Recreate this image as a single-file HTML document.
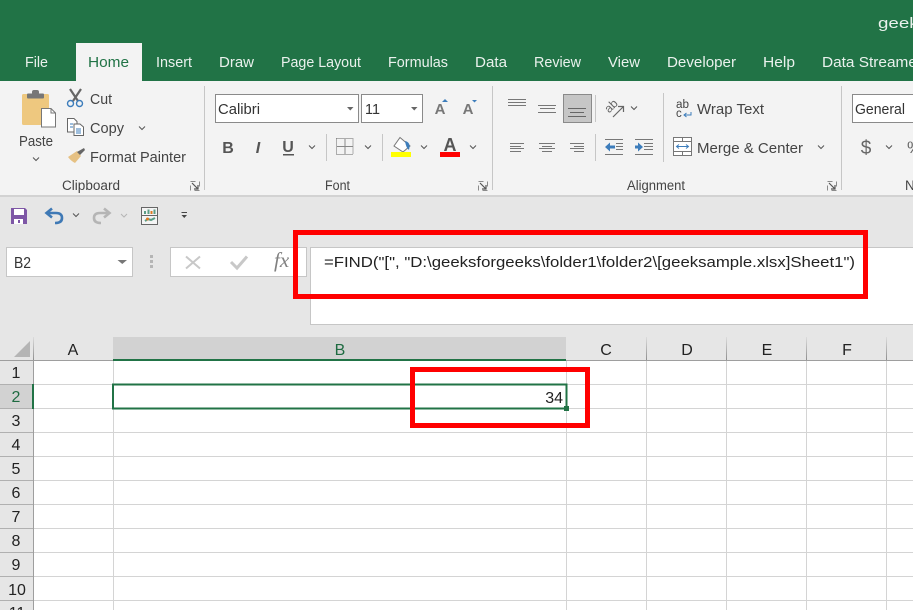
<!DOCTYPE html>
<html><head><meta charset="utf-8"><style>
html,body{margin:0;padding:0;width:913px;height:610px;overflow:hidden;background:#fff}
svg{display:block}
text{font-family:"Liberation Sans",sans-serif;white-space:pre}
.t{font-size:15px;fill:#eaf1ed}
.r{font-size:15px;fill:#444}
.g{font-size:13.5px;fill:#444}
.h{font-size:16px;fill:#222;text-anchor:middle}
</style></head><body>
<svg width="913" height="610" viewBox="0 0 913 610" xmlns="http://www.w3.org/2000/svg">
<defs>
<path id="chev" d="M-3 -1.5L0 1.5L3 -1.5" fill="none" stroke="#555" stroke-width="1"/>
<g id="dl"><rect x="0.5" y="0.5" width="9" height="9" fill="none" stroke="#8a8a8a" stroke-width="1" stroke-dasharray="5 4"/><path d="M2 2L8 8M8 4V8H4" fill="none" stroke="#555" stroke-width="1.2"/></g>
<linearGradient id="hd" x1="0" y1="0" x2="0" y2="1"><stop offset="0" stop-color="#dcdcdc"/><stop offset="1" stop-color="#8f8f8f"/></linearGradient>
</defs>
<rect width="913" height="610" fill="#fff"/>
<!-- title + tabs -->
<rect width="913" height="81" fill="#217346"/>
<rect x="76" y="43" width="66" height="38" fill="#f3f3f3"/>
<text x="878" y="28" class="t" fill="#fff" textLength="50" lengthAdjust="spacingAndGlyphs">geeks</text>
<text x="25" y="67" class="t" textLength="23" lengthAdjust="spacingAndGlyphs">File</text>
<text x="88" y="67" class="t" style="fill:#217346" textLength="41" lengthAdjust="spacingAndGlyphs">Home</text>
<text x="156" y="67" class="t" textLength="36" lengthAdjust="spacingAndGlyphs">Insert</text>
<text x="219" y="67" class="t" textLength="35" lengthAdjust="spacingAndGlyphs">Draw</text>
<text x="281" y="67" class="t" textLength="80" lengthAdjust="spacingAndGlyphs">Page Layout</text>
<text x="388" y="67" class="t" textLength="60" lengthAdjust="spacingAndGlyphs">Formulas</text>
<text x="475" y="67" class="t" textLength="32" lengthAdjust="spacingAndGlyphs">Data</text>
<text x="534" y="67" class="t" textLength="47" lengthAdjust="spacingAndGlyphs">Review</text>
<text x="608" y="67" class="t" textLength="32" lengthAdjust="spacingAndGlyphs">View</text>
<text x="667" y="67" class="t" textLength="69" lengthAdjust="spacingAndGlyphs">Developer</text>
<text x="763" y="67" class="t" textLength="32" lengthAdjust="spacingAndGlyphs">Help</text>
<text x="822" y="67" class="t" textLength="100" lengthAdjust="spacingAndGlyphs">Data Streamer</text>
<!-- ribbon -->
<rect y="81" width="913" height="114" fill="#f3f3f3"/>
<rect y="195" width="913" height="2" fill="#d2d2d2"/>
<rect y="197" width="913" height="140" fill="#e6e6e6"/>
<g fill="#c6c6c6">
<rect x="204" y="86" width="1" height="104"/><rect x="492" y="86" width="1" height="104"/><rect x="841" y="86" width="1" height="104"/>
<rect x="326" y="134" width="1" height="27"/><rect x="382" y="134" width="1" height="27"/>
<rect x="595" y="95" width="1" height="27"/><rect x="595" y="134" width="1" height="27"/>
<rect x="663" y="93" width="1" height="69"/>
</g>
<!-- clipboard -->
<rect x="22" y="94" width="27" height="31" rx="1.5" fill="#eec87f"/>
<rect x="27" y="93.500" width="17" height="5" rx="1" fill="#777"/>
<rect x="32" y="90" width="7" height="5" rx="2" fill="#777"/>
<path d="M41.500 108.500H51L55.500 113V127H41.500Z" fill="#fff" stroke="#777"/>
<path d="M51 108.500V113H55.500" fill="none" stroke="#777"/>
<text x="19" y="146" class="r" textLength="34" lengthAdjust="spacingAndGlyphs">Paste</text>
<use href="#chev" x="36" y="159"/>
<path d="M70 89L78 101M81 89L73 101" stroke="#666" stroke-width="2.200" fill="none"/>
<circle cx="70.500" cy="103.500" r="3" fill="none" stroke="#3d7dbb" stroke-width="1.400"/><circle cx="79.500" cy="103.500" r="3" fill="none" stroke="#3d7dbb" stroke-width="1.400"/>
<text x="90" y="104" class="r" textLength="22" lengthAdjust="spacingAndGlyphs">Cut</text>
<path d="M67.500 118.500H74L77 121.500V132H67.500Z" fill="#fff" stroke="#666"/>
<path d="M74 124H80L83.500 127V135.500H74Z" fill="#fff" stroke="#666"/>
<path d="M70 124H73M70 127H73M76 129H81M76 131H81M76 133H81" stroke="#3d7dbb"/>
<text x="90" y="133" class="r" textLength="34" lengthAdjust="spacingAndGlyphs">Copy</text>
<use href="#chev" x="142" y="128"/>
<path d="M68 157L77 151L81 156L75 163Q71 161 68 157Z" fill="#e6c183"/>
<path d="M77 152L84 148L85 150L80 155Z" fill="#666"/>
<text x="90" y="162" class="r" textLength="96" lengthAdjust="spacingAndGlyphs">Format Painter</text>
<text x="62" y="190" class="g" textLength="58" lengthAdjust="spacingAndGlyphs">Clipboard</text>
<use href="#dl" x="190" y="181"/>
<!-- font -->
<rect x="215.500" y="94.500" width="143" height="28" fill="#fff" stroke="#8a8a8a"/>
<rect x="361.500" y="94.500" width="61" height="28" fill="#fff" stroke="#8a8a8a"/>
<text x="218" y="114" font-size="14.500" fill="#333" textLength="42" lengthAdjust="spacingAndGlyphs">Calibri</text>
<text x="365" y="114" font-size="14.500" fill="#333" textLength="15" lengthAdjust="spacingAndGlyphs">11</text>
<path d="M347 107H353.500L350.250 110.500Z" fill="#666"/><path d="M411 107H417.500L414.250 110.500Z" fill="#666"/>
<text x="440" y="114" font-size="15" font-weight="bold" fill="#777" text-anchor="middle">A</text>
<path d="M442 102L445 99L448 102Z" fill="#3d7dbb"/>
<text x="468" y="114" font-size="15" font-weight="bold" fill="#777" text-anchor="middle">A</text>
<path d="M472 100L474.500 102.500L477 100Z" fill="#3d7dbb"/>
<text x="228" y="153" font-size="16" font-weight="bold" fill="#555" text-anchor="middle">B</text>
<text x="258" y="153" font-size="16" font-weight="bold" font-style="italic" fill="#555" text-anchor="middle">I</text>
<text x="288" y="152" font-size="16" font-weight="bold" fill="#555" text-anchor="middle">U</text>
<rect x="283" y="154" width="11" height="1.500" fill="#555"/>
<use href="#chev" x="312" y="147"/>
<path d="M336.500 138.500H353M336.500 154.500H353M336.500 138.500V154.500M353 138.500V154.500" stroke="#666" stroke-dasharray="1 1" fill="none"/>
<path d="M345 139V154M337 146.500H353" stroke="#888" fill="none"/>
<use href="#chev" x="368" y="147"/>
<path d="M400 137.500L410 146L403 152L394 146Z" fill="#fff" stroke="#777"/>
<path d="M405 141Q411 142 409 150Q406 148 405 141Z" fill="#3d7dbb"/>
<rect x="391" y="152" width="20" height="5" fill="#ff0"/>
<use href="#chev" x="424" y="147"/>
<text x="450" y="151" font-size="18" font-weight="bold" fill="#555" text-anchor="middle">A</text>
<rect x="440" y="152" width="20" height="5" fill="#f00"/>
<use href="#chev" x="473" y="147"/>
<text x="325" y="190" class="g" textLength="25" lengthAdjust="spacingAndGlyphs">Font</text>
<use href="#dl" x="478" y="181"/>
<!-- alignment -->
<g stroke="#777" stroke-width="1" fill="none">
<path d="M508 99.500H526M508 102.500H526M508 105.500H526"/>
<path d="M538 105.500H556M540 108.500H555M538 112.500H556"/>
<path d="M510 143.500H524M510 146.500H521M510 148.500H524M510 151.500H521"/>
<path d="M539 143.500H555M542 146.500H552M539 148.500H555M542 151.500H552"/>
<path d="M570 143.500H584M574 146.500H584M570 148.500H584M574 151.500H584"/>
<path d="M605 139.500H623M616 143.500H623M616 146.500H623M616 149.500H623M605 154.500H623"/>
<path d="M635 139.500H653M644 143.500H653M644 146.500H653M644 149.500H653M635 154.500H653"/>
</g>
<path d="M605 147L610 142.500V145.500H615V148.500H610V151.500Z" fill="#3d7dbb"/>
<path d="M643 147L638 142.500V145.500H635V148.500H638V151.500Z" fill="#3d7dbb"/>
<rect x="563.500" y="94.500" width="28" height="28" fill="#c6c6c6" stroke="#8a8a8a"/>
<path d="M568 108.500H586M570 112.500H584M568 116.500H586" stroke="#666" fill="none"/>
<text x="611" y="110" font-size="12" fill="#666" text-anchor="middle" transform="rotate(-45 611 106)">ab</text>
<path d="M613 117L623 107M618 106.500H623.500V112" stroke="#666" fill="none" stroke-width="1.200"/>
<use href="#chev" x="634" y="108"/>
<text x="676" y="108" font-size="11.500" fill="#444" textLength="13" lengthAdjust="spacingAndGlyphs">ab</text>
<text x="676" y="117" font-size="11.500" fill="#444">c</text>
<path d="M691 112V115H684M686.500 113L684 115L686.500 117" stroke="#3d7dbb" fill="none"/>
<text x="697" y="114" class="r" textLength="67" lengthAdjust="spacingAndGlyphs">Wrap Text</text>
<rect x="673.500" y="137.500" width="18" height="18" fill="#fff" stroke="#777"/>
<path d="M674 141.500H691M674 151.500H691M682.500 138V141M682.500 152V155" stroke="#777" fill="none"/>
<path d="M677 146.500H688M679 144.500L676.500 146.500L679 148.500M686 144.500L688.500 146.500L686 148.500" stroke="#3d7dbb" fill="none"/>
<text x="697" y="153" class="r" textLength="106" lengthAdjust="spacingAndGlyphs">Merge &amp; Center</text>
<use href="#chev" x="821" y="147"/>
<text x="627" y="190" class="g" textLength="58" lengthAdjust="spacingAndGlyphs">Alignment</text>
<use href="#dl" x="827" y="181"/>
<!-- number -->
<rect x="852.500" y="94.500" width="70" height="28" fill="#fff" stroke="#8a8a8a"/>
<text x="855" y="114" font-size="14.500" fill="#333" textLength="50" lengthAdjust="spacingAndGlyphs">General</text>
<text x="866" y="154" font-size="19" fill="#666" text-anchor="middle">$</text>
<use href="#chev" x="889" y="147"/>
<text x="907" y="153" font-size="17" fill="#666">%</text>
<text x="905" y="190" class="g">N</text>
<!-- QAT -->
<path d="M11 208H25L27 210V224H11Z" fill="#7e57a6"/>
<rect x="14" y="209" width="10" height="6" fill="#fff"/><rect x="14" y="219" width="9" height="5" fill="#fff"/><rect x="18" y="220" width="2" height="3" fill="#7e57a6"/>
<path d="M47 213H56Q62 213 62 218Q62 223 55 223" fill="none" stroke="#3f79b5" stroke-width="2.600"/>
<path d="M52 208.500L46.500 213L52 217.500" fill="none" stroke="#3f79b5" stroke-width="2.600"/>
<use href="#chev" x="76" y="215"/>
<path d="M109 213H100Q94 213 94 218Q94 223 101 223" fill="none" stroke="#b5b5b5" stroke-width="2.600"/>
<path d="M104 208.500L109.500 213L104 217.500" fill="none" stroke="#b5b5b5" stroke-width="2.600"/>
<path d="M121 214L124 217L127 214" fill="none" stroke="#b5b5b5"/>
<rect x="141.500" y="207.500" width="16" height="17" fill="#f4f4f4" stroke="#666"/>
<path d="M142 215.500H157" stroke="#666"/>
<rect x="144" y="211" width="2" height="3" fill="#5b9d86"/><rect x="147.500" y="209.500" width="2" height="4.500" fill="#5b9d86"/><rect x="150.500" y="211" width="2" height="3" fill="#e07a22"/><rect x="153.500" y="209.500" width="2" height="4.500" fill="#5b9d86"/>
<path d="M145 221L148 219L151 220L155 218" stroke="#5b9d86" stroke-width="2" fill="none"/><circle cx="147.500" cy="219" r="1.500" fill="#e07a22"/>
<path d="M181.500 212.500H187" stroke="#444"/><path d="M181.500 215H187L184.250 218Z" fill="#444"/>
<!-- formula bar -->
<rect x="6.500" y="247.500" width="126" height="29" fill="#fff" stroke="#c6c6c6"/>
<text x="14" y="268" font-size="16" fill="#333" textLength="17" lengthAdjust="spacingAndGlyphs">B2</text>
<path d="M117.500 260H127L122.250 264Z" fill="#777"/>
<rect x="150" y="255" width="3" height="3" fill="#b5b5b5"/><rect x="150" y="260" width="3" height="3" fill="#b5b5b5"/><rect x="150" y="265" width="3" height="3" fill="#b5b5b5"/>
<rect x="170.500" y="247.500" width="136" height="29" fill="#fff" stroke="#c6c6c6"/>
<path d="M186 256.500L200 268.500M200 256.500L186 268.500" stroke="#c8c8c8" stroke-width="2" fill="none"/>
<path d="M231 262L237 268L247 256.500" stroke="#c8c8c8" stroke-width="3" fill="none"/>
<text x="274" y="267" font-size="21" font-style="italic" fill="#808080" style="font-family:'Liberation Serif',serif">fx</text>
<rect x="310.500" y="247.500" width="610" height="77" fill="#fff" stroke="#c6c6c6"/>
<text x="324" y="267" font-size="14.500" fill="#222" textLength="531" lengthAdjust="spacingAndGlyphs">=FIND("[", "D:\geeksforgeeks\folder1\folder2\[geeksample.xlsx]Sheet1")</text>
<!-- grid -->
<rect y="337" width="913" height="23" fill="#e6e6e6"/>
<rect y="360" width="33" height="250" fill="#e6e6e6"/>
<rect x="113" y="337" width="453" height="23" fill="#d2d2d2"/>
<rect y="384" width="33" height="24" fill="#d2d2d2"/>
<path d="M30 341V357H14Z" fill="#b5b5b5"/>
<g fill="#d4d4d4">
<rect x="113" y="360" width="1" height="250"/><rect x="566" y="360" width="1" height="250"/><rect x="646" y="360" width="1" height="250"/><rect x="726" y="360" width="1" height="250"/><rect x="806" y="360" width="1" height="250"/><rect x="886" y="360" width="1" height="250"/>
<rect x="33" y="384" width="880" height="1"/><rect x="33" y="408" width="880" height="1"/><rect x="33" y="432" width="880" height="1"/><rect x="33" y="456" width="880" height="1"/><rect x="33" y="480" width="880" height="1"/><rect x="33" y="504" width="880" height="1"/><rect x="33" y="528" width="880" height="1"/><rect x="33" y="552" width="880" height="1"/><rect x="33" y="576" width="880" height="1"/><rect x="33" y="600" width="880" height="1"/>
</g>
<g fill="url(#hd)">
<rect x="33" y="337" width="1" height="23"/><rect x="646" y="337" width="1" height="23"/><rect x="726" y="337" width="1" height="23"/><rect x="806" y="337" width="1" height="23"/><rect x="886" y="337" width="1" height="23"/>
</g>
<rect y="360" width="913" height="1" fill="#9e9e9e"/>
<rect x="33" y="360" width="1" height="250" fill="#9e9e9e"/>
<g fill="#b0b0b0"><rect y="384" width="33" height="1"/><rect y="408" width="33" height="1"/><rect y="432" width="33" height="1"/><rect y="456" width="33" height="1"/><rect y="480" width="33" height="1"/><rect y="504" width="33" height="1"/><rect y="528" width="33" height="1"/><rect y="552" width="33" height="1"/><rect y="576" width="33" height="1"/><rect y="600" width="33" height="1"/></g>
<rect x="113" y="359" width="453" height="2" fill="#217346"/>
<rect x="32" y="384" width="2" height="25" fill="#217346"/>
<text x="73" y="355" class="h">A</text>
<text x="340" y="355" class="h" style="fill:#1e6b41">B</text>
<text x="606" y="355" class="h">C</text>
<text x="687" y="355" class="h">D</text>
<text x="767" y="355" class="h">E</text>
<text x="847" y="355" class="h">F</text>
<g>
<text x="16" y="378" class="h">1</text>
<text x="16" y="402" class="h" style="fill:#1e6b41">2</text>
<text x="16" y="426" class="h">3</text>
<text x="16" y="450" class="h">4</text>
<text x="16" y="474" class="h">5</text>
<text x="16" y="498" class="h">6</text>
<text x="16" y="522" class="h">7</text>
<text x="16" y="546" class="h">8</text>
<text x="16" y="570" class="h">9</text>
<text x="17" y="595" class="h">10</text>
<text x="17" y="618" class="h">11</text>
</g>
<rect x="113" y="384.500" width="453.500" height="24" fill="#fff" stroke="#217346" stroke-width="2"/>
<rect x="564" y="406" width="5" height="5" fill="#217346"/>
<text x="563" y="403" font-size="16" fill="#222" text-anchor="end">34</text>
<!-- red highlights -->
<rect x="295.500" y="232.500" width="570" height="64" fill="none" stroke="#f00" stroke-width="5"/>
<rect x="412.500" y="369.500" width="175" height="56" fill="none" stroke="#f00" stroke-width="5"/>
</svg>
</body></html>
